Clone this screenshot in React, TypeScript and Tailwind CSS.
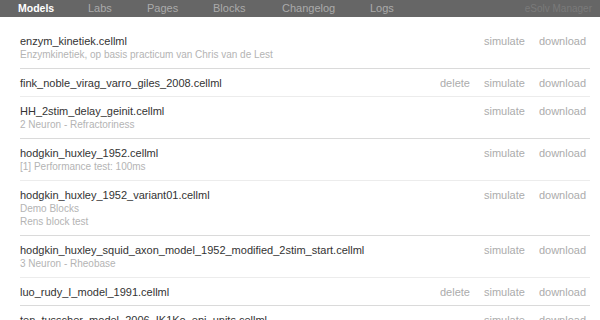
const NAV = [
  { label: 'Models', w: 'w-[70px]' },
  { label: 'Labs', w: 'w-[59px]' },
  { label: 'Pages', w: 'w-[66px]' },
  { label: 'Blocks', w: 'w-[69px]' },
  { label: 'Changelog', w: 'w-[88px]' },
  { label: 'Logs', w: 'w-[60px]' },
]

type Model = { name: string; notes: string[]; canDelete?: boolean }

const MODELS: Model[] = [
  { name: 'enzym_kinetiek.cellml', notes: ['Enzymkinetiek, op basis practicum van Chris van de Lest'] },
  { name: 'fink_noble_virag_varro_giles_2008.cellml', notes: [], canDelete: true },
  { name: 'HH_2stim_delay_geinit.cellml', notes: ['2 Neuron - Refractoriness'] },
  { name: 'hodgkin_huxley_1952.cellml', notes: ['[1] Performance test: 100ms'] },
  { name: 'hodgkin_huxley_1952_variant01.cellml', notes: ['Demo Blocks', 'Rens block test'] },
  { name: 'hodgkin_huxley_squid_axon_model_1952_modified_2stim_start.cellml', notes: ['3 Neuron - Rheobase'] },
  { name: 'luo_rudy_I_model_1991.cellml', notes: [], canDelete: true },
  { name: 'ten_tusscher_model_2006_IK1Ko_epi_units.cellml', notes: [] },
]

export default function App() {
  return (
    <div className="h-[320px] w-[600px] overflow-hidden bg-white font-['Liberation_Sans',Arial,sans-serif]">
      <div className="flex h-[17px] items-center bg-[#666666] pl-[18px] text-[11px] leading-[17px]">
        {NAV.map((n, i) => (
          <span
            key={n.label}
            className={
              n.w + ' shrink-0 ' +
              (i === 0 ? 'text-[10.5px] font-bold text-white' : 'text-[#ababab]')
            }
          >
            {n.label}
          </span>
        ))}
        <span className="ml-auto pr-[8px] text-[10px] text-[#7a7a7a]">eSolv Manager</span>
      </div>

      <div className="ml-5 mr-[10px] mt-[10px]">
        {MODELS.map((m, i) => (
          <div
            key={m.name}
            className={
              'flex items-start border-b pt-[7px] ' +
              (m.notes.length ? 'pb-[7px] ' : 'pb-[6px] ') +
              (i % 2 === 0 ? 'border-[#dadada]' : 'border-[#ececec]')
            }
          >
            <div className="flex-1">
              <div className="text-[11px] leading-[14px] text-[#333333]">{m.name}</div>
              {m.notes.map((t) => (
                <div key={t} className="text-[10px] leading-[13px] text-[#b4b4b4]">
                  {t}
                </div>
              ))}
            </div>
            <div className="flex gap-[14px] pr-[4px] text-[11px] leading-[14px] text-[#acacac]">
              {m.canDelete && <span>delete</span>}
              <span>simulate</span>
              <span>download</span>
            </div>
          </div>
        ))}
      </div>
    </div>
  )
}
